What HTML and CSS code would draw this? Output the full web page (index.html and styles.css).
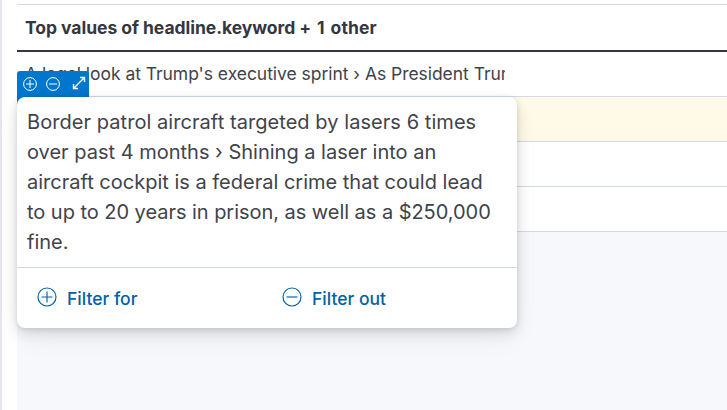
FILE: index.html
```html
<!DOCTYPE html>
<html lang="en">
<head>
<meta charset="utf-8">
<title>Top values</title>
<link rel="stylesheet" href="styles.css">
</head>
<body>
<main class="panel">
  <div class="grid">
    <div class="row header">Top values of headline.keyword <span class="count">+ 1 other</span></div>
    <div class="row first"><span class="cell">A legal look at Trump's executive sprint › As President Trump</span></div>
    <div class="row selected"></div>
    <div class="row"></div>
    <div class="row"></div>
  </div>
  <div class="actions">
    <svg class="icon" viewBox="0 0 14 14"><circle cx="7" cy="7" r="6.4"/><path d="M3 7h8M7 3v8"/></svg>
    <svg class="icon" viewBox="0 0 14 14"><circle cx="7" cy="7" r="6.4"/><path d="M3 7h8"/></svg>
    <svg class="icon expand" viewBox="0 0 14 14"><path d="M8 1.500h4.500V6M12.500 1.500l-11 11M6 12.500H1.500V8"/></svg>
  </div>
  <section class="popover">
    <p class="text"><span class="wide">Border patrol aircraft targeted by lasers 6 times</span><br>over past 4 months › Shining a laser into an<br>aircraft cockpit is a federal crime that could lead<br><span class="tight">to up to 20 years in prison, as well as a $250,000</span><br>fine.</p>
    <footer class="footer">
      <button class="filter"><svg viewBox="0 0 20 20"><circle cx="10" cy="10" r="9"/><path d="M4.500 10h11M10 4.500v11"/></svg>Filter for</button>
      <button class="filter"><svg viewBox="0 0 20 20"><circle cx="10" cy="10" r="9"/><path d="M4.500 10h11"/></svg>Filter out</button>
    </footer>
  </section>
</main>
</body>
</html>
```
FILE: styles.css
```css
* { box-sizing: border-box; }
body { margin: 0; width: 727px; height: 410px; overflow: hidden; background: #fff; color: #343741; font-family: Inter, sans-serif; }
.panel { position: relative; height: 410px; border-left: 2px solid #e6e7ee; padding: 4px 0 0 15px; }
.grid { height: 406px; background: #f7f8fc; border-top: 1px solid #d3dae6; }
.row { height: 45px; background: #fff; border-bottom: 1px solid #d3dae6; padding: 0 8px; line-height: 44px; font-size: 17.5px; white-space: nowrap; }
.header { height: 47px; border-bottom: 2px solid #343741; font-weight: 700; line-height: 46px; letter-spacing: -0.04px; }
.count { letter-spacing: 0.1px; word-spacing: 1.6px; }
.cell { display: block; width: 480px; overflow: hidden; color: #40434c; letter-spacing: -0.04px; }
.selected { background: #fff9e8; }
.actions { position: absolute; left: 15px; top: 71px; width: 72px; height: 34px; display: flex; align-items: flex-start; gap: 9px; padding: 6px 6px 0; background: #0077cc; border-radius: 3px 3px 0 0; }
.icon { width: 14px; height: 14px; flex: none; fill: none; stroke: #fff; stroke-width: 1; }
.expand { margin: -1px 0 0 3px; stroke-width: 1.4; }
.popover { position: absolute; left: 15px; top: 97px; width: 500px; height: 231px; background: #fff; border-radius: 8px; box-shadow: 0 1px 5px #0000001a, 0 4px 13px #00000012, 0 7px 16px #0000000f, 0 12px 28px #0000000a; }
.text { margin: 0; padding: 10px; height: 170px; color: #40434c; font-size: 20px; line-height: 30px; white-space: nowrap; }
.wide { letter-spacing: 0.06px; }
.tight { letter-spacing: -0.04px; }
.footer { height: 61px; border-top: 1px solid #d3dae6; display: grid; grid-template-columns: 245px 1fr; padding-left: 19.500px; }
.filter { display: flex; align-items: center; gap: 10.500px; border: 0; padding: 0; background: none; color: #0061a6; font: 500 17.5px Inter, sans-serif; }
.filter svg { width: 20px; height: 20px; margin-top: -2px; fill: none; stroke: currentColor; stroke-width: 1.15; }
```
